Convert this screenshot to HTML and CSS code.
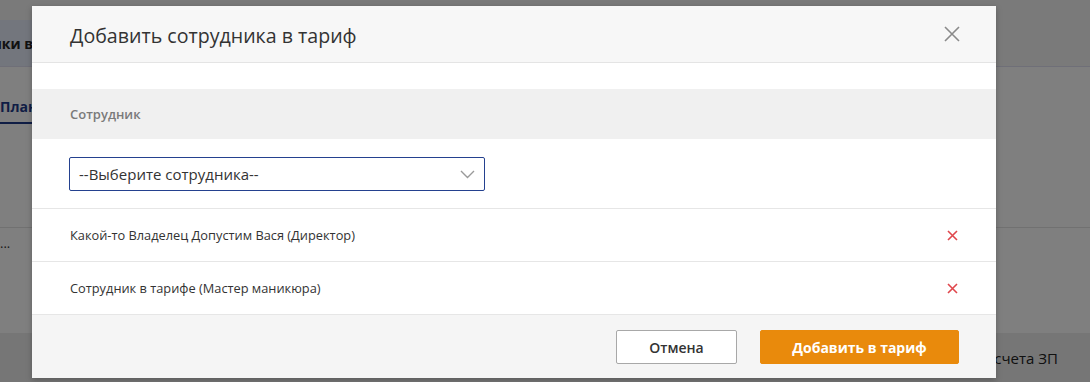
FILE: index.html
```html
<!DOCTYPE html>
<html lang="ru">
<head>
<meta charset="utf-8">
<title>Добавить сотрудника в тариф</title>
<link rel="stylesheet" href="styles.css">
</head>
<body>
<div class="page">
  <div class="topbar">
    <div class="tabs">
      <div class="tab active">Сотрудники в тарифе</div>
    </div>
  </div>
  <div class="subnav"><a class="sublink">Планы продаж</a></div>
  <div class="table">
    <div class="trow">...</div>
  </div>
  <div class="bottombar"><span class="blink">Настройки расчета ЗП</span></div>
</div>

<div class="overlay"></div>

<div class="modal">
  <div class="modal-header">
    <h2 class="modal-title">Добавить сотрудника в тариф</h2>
    <button class="close" aria-label="Закрыть">
      <svg width="16" height="16" viewBox="0 0 16 16"><path d="M1 1L15 15M15 1L1 15" stroke="#8a8a8a" stroke-width="1.6" fill="none"/></svg>
    </button>
  </div>
  <div class="modal-spacer"></div>
  <div class="section-label">Сотрудник</div>
  <div class="select-row">
    <div class="select">
      <span>--Выберите сотрудника--</span>
      <svg class="chev" width="15" height="9" viewBox="0 0 15 9"><path d="M1 1L7.5 7.5L14 1" stroke="#9a9a9a" stroke-width="1.4" fill="none"/></svg>
    </div>
  </div>
  <div class="emp-row">
    <span>Какой-то Владелец Допустим Вася (Директор)</span>
    <svg class="del" width="11" height="11" viewBox="0 0 11 11"><path d="M1 1L10 10M10 1L1 10" stroke="#e0474c" stroke-width="1.6" fill="none"/></svg>
  </div>
  <div class="emp-row">
    <span>Сотрудник в тарифе (Мастер маникюра)</span>
    <svg class="del" width="11" height="11" viewBox="0 0 11 11"><path d="M1 1L10 10M10 1L1 10" stroke="#e0474c" stroke-width="1.6" fill="none"/></svg>
  </div>
  <div class="modal-footer">
    <button class="btn btn-cancel">Отмена</button>
    <button class="btn btn-primary">Добавить в тариф</button>
  </div>
</div>
</body>
</html>
```

FILE: styles.css
```css
* { box-sizing: border-box; }
html, body { margin: 0; padding: 0; }
body {
  width: 1090px;
  height: 382px;
  overflow: hidden;
  font-family: "Open Sans", "Noto Sans", sans-serif;
  background: #ffffff;
  position: relative;
}
.page {
  display: flex;
  flex-direction: column;
  height: 382px;
}
.topbar {
  height: 67px;
  background: #f4f4f4;
  border-bottom: 1px solid #dedef0;
  padding-top: 20px;
}
.tabs { display: flex; height: 46px; }
.tab {
  width: 240px;
  background: #e6ecfa;
  font-weight: 700;
  font-size: 14px;
  color: #222;
  padding: 14px 0 0 0;
  margin-left: -69px;
  white-space: nowrap;
}
.subnav {
  height: 56px;
  padding-top: 28px;
}
.sublink {
  display: inline-block;
  margin-left: -60px;
  padding-left: 60px;
  font-size: 14px;
  font-weight: 700;
  color: #1f3a8a;
  border-bottom: 2px solid #1f3a8a;
  padding-bottom: 6px;
}
.table {
  margin-top: 104px;
  border-top: 1px solid #e2e2e2;
  height: 34px;
}
.trow {
  font-size: 13px;
  color: #333;
  padding-top: 6px;
}
.bottombar {
  margin-top: auto;
  height: 49px;
  background: #ececec;
  display: flex;
  justify-content: flex-end;
  align-items: center;
  padding-right: 32px;
}
.blink { font-size: 15px; color: #222; }

.overlay {
  position: absolute;
  inset: 0;
  background: rgba(0, 0, 0, 0.5);
}

.modal {
  position: absolute;
  left: 32px;
  top: 6px;
  width: 964px;
  height: 372px;
  background: #ffffff;
  display: flex;
  flex-direction: column;
  box-shadow: 0 2px 6px rgba(0,0,0,0.25);
}
.modal-header {
  height: 57px;
  flex: none;
  background: #f7f7f7;
  border-bottom: 1px solid #e4e4e4;
  display: flex;
  align-items: center;
  justify-content: space-between;
  padding: 0 36px 0 38px;
}
.modal-title {
  margin: 0;
  font-size: 19.6px;
  font-weight: 400;
  color: #333;
  padding-top: 2px;
}
.close {
  border: 0;
  background: none;
  padding: 0;
  width: 16px;
  height: 16px;
  display: block;
}
.close svg { display: block; }
.modal-spacer { height: 26px; flex: none; }
.section-label {
  height: 50px;
  flex: none;
  background: #f0f0f0;
  padding-left: 38px;
  display: flex;
  align-items: center;
  font-size: 13px;
  font-weight: 600;
  color: #7a7a7a;
}
.select-row {
  height: 70px;
  flex: none;
  padding: 18px 0 0 37px;
  border-bottom: 1px solid #e6e6e6;
}
.select {
  width: 416px;
  height: 34px;
  border: 1px solid #24418f;
  border-radius: 2px;
  display: flex;
  align-items: center;
  justify-content: space-between;
  padding: 0 9px 0 9px;
  font-size: 15px;
  color: #333;
}
.chev { display: block; }
.emp-row {
  height: 53px;
  flex: none;
  border-bottom: 1px solid #e6e6e6;
  display: flex;
  align-items: center;
  justify-content: space-between;
  padding: 0 38px 0 38px;
  font-size: 12.8px;
  color: #333;
}
.emp-row:last-of-type { height: 52px; }
.del { display: block; }
.modal-footer {
  flex: 1;
  background: #f5f5f5;
  display: flex;
  justify-content: flex-end;
  align-items: flex-start;
  gap: 23px;
  padding: 15px 37px 0 0;
}
.btn {
  height: 34px;
  font-family: inherit;
  font-size: 14px;
  font-weight: 600;
  border-radius: 2px;
  cursor: pointer;
}
.btn-cancel {
  width: 121px;
  background: #ffffff;
  border: 1px solid #a8a8a8;
  color: #333;
}
.btn-primary {
  width: 199px;
  background: #e98a0c;
  border: 1px solid #e98a0c;
  color: #ffffff;
  font-weight: 700;
}
```
